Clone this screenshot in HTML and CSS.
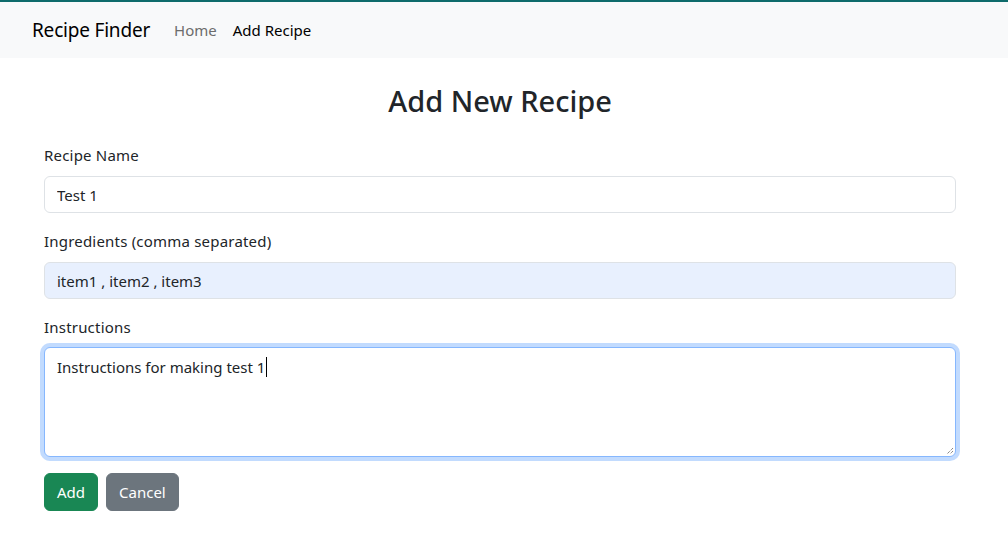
FILE: index.html
```html
<!DOCTYPE html>
<html lang="en">
<head>
<meta charset="utf-8">
<title>Recipe Finder</title>
<link rel="stylesheet" href="styles.css">
</head>
<body>
<nav class="navbar">
  <a class="brand" href="#">Recipe Finder</a>
  <ul class="nav-links">
    <li><a class="nav-link" href="#">Home</a></li>
    <li><a class="nav-link active" href="#">Add Recipe</a></li>
  </ul>
</nav>
<main class="content">
  <h2 class="title">Add New Recipe</h2>
  <form class="form">
    <div class="field">
      <label class="label" for="name">Recipe Name</label>
      <input class="control" id="name" type="text" value="Test 1">
    </div>
    <div class="field">
      <label class="label" for="ing">Ingredients (comma separated)</label>
      <input class="control autofilled" id="ing" type="text" value="item1 , item2 , item3">
    </div>
    <div class="field">
      <label class="label" for="ins">Instructions</label>
      <div class="textarea-wrap">
        <div class="control textarea focused" id="ins">Instructions for making test 1<span class="caret"></span></div>
        <svg class="grip" width="10" height="10" viewBox="0 0 10 10"><path d="M9 3L3 9M9 6L6 9" stroke="#555" stroke-width="1" stroke-dasharray="1 1" fill="none"/></svg>
      </div>
    </div>
    <div class="actions">
      <button type="button" class="btn btn-success">Add</button>
      <button type="button" class="btn btn-secondary">Cancel</button>
    </div>
  </form>
</main>
</body>
</html>
```
FILE: styles.css
```css
* { box-sizing: border-box; }
html, body { margin: 0; padding: 0; }
body {
  font-family: "Noto Sans", "Open Sans", sans-serif;
  font-size: 15px;
  color: #212529;
  background: #fff;
  border-top: 2px solid #0e6b6b;
}
a { text-decoration: none; }
.navbar {
  background: #f8f9fa;
  height: 56px;
  display: flex;
  align-items: center;
  padding: 0 0 0 32px;
}
.brand {
  font-size: 19px;
  color: #000;
  margin-right: 24px;
  letter-spacing: -0.2px;
}
.nav-links {
  list-style: none;
  display: flex;
  margin: 0;
  padding: 0;
  gap: 16px;
}
.nav-link { color: #6c6c6c; font-size: 15px; }
.nav-link.active { color: #000; }
.content {
  padding: 0 52px 0 44px;
}
.title {
  margin: 24px 0 0;
  text-align: center;
  font-size: 29px;
  font-weight: 500;
  line-height: 38px;
  color: #212529;
}
.form { margin-top: 23px; }
.field { margin-bottom: 16px; }
.label {
  display: block;
  line-height: 24px;
  margin-bottom: 9px;
  letter-spacing: 0.2px;
}
.control {
  display: block;
  width: 100%;
  height: 37px;
  padding: 0 12px;
  font: inherit;
  color: #212529;
  border: 1px solid #dee2e6;
  border-radius: 6px;
  background: #fff;
  outline: none;
}
.autofilled { background: #e8f0fe; }
.textarea-wrap { position: relative; margin-top: -1px; }
.textarea {
  height: 110px;
  padding: 7px 12px;
  line-height: 24px;
}
.focused {
  border-color: #86b7fe;
  box-shadow: 0 0 0 4px #c2dbfe;
}
.caret {
  display: inline-block;
  width: 1px;
  height: 20px;
  background: #000;
  vertical-align: -4px;
  margin-left: 1px;
}
.grip { position: absolute; right: 2px; bottom: 2px; }
.actions { display: flex; gap: 8px; margin-top: 0; }
.btn {
  font: inherit;
  height: 38px;
  padding: 0 12px;
  border: 1px solid transparent;
  border-radius: 6px;
  color: #fff;
  line-height: 36px;
}
.btn-success { background: #198754; border-color: #198754; }
.btn-secondary { background: #6c757d; border-color: #6c757d; }
```
